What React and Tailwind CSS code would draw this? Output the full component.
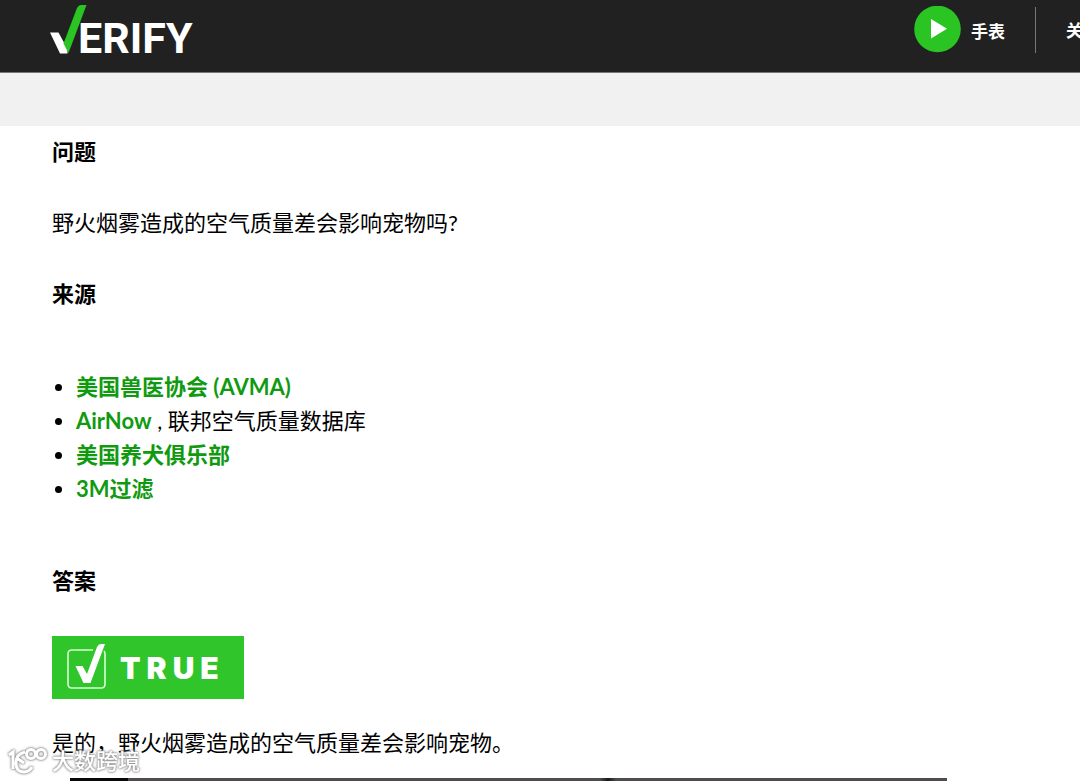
import React from "react";

const sources = [
  { link: "美国兽医协会 (AVMA)" },
  { link: "AirNow", note: " , 联邦空气质量数据库" },
  { link: "美国养犬俱乐部" },
  { link: "3M过滤" },
];

function Logo() {
  return (
    <a href="#home" aria-label="VERIFY" className="flex items-end">
      <svg width="38" height="51" viewBox="0 0 38 51" aria-hidden="true">
        <path d="M0 28.500h8.500l6 11 3 5v5H10z" fill="#fff" />
        <path d="M18.500 49L13.500 39.500 27 4Q28.500 1 31 1h5.500z" fill="#2ac523" />
      </svg>
      <span className="-ml-[10px] text-[43px] leading-[34px] font-bold text-white font-['Roboto',sans-serif]">
        ERIFY
      </span>
    </a>
  );
}

function Header() {
  return (
    <header className="flex h-[73px] justify-between overflow-hidden border-b border-[#777] bg-[#212121] pl-[50px]">
      <div className="pt-1">
        <Logo />
      </div>
      <nav className="flex items-start pt-[6px] text-[17px] font-bold text-white">
        <a href="#watch" className="flex items-center gap-[9px]">
          <svg width="48" height="47" viewBox="0 0 48 47" aria-hidden="true">
            <circle cx="23.5" cy="23" r="23.3" fill="#2ac523" />
            <path d="M17 13v19.500L33 22.700z" fill="#fff" />
          </svg>
          <span className="pt-1">手表</span>
        </a>
        <span className="mt-px ml-[30px] h-[46px] border-l border-[#777]" />
        <a href="#about" className="ml-[30px] w-[14px] overflow-hidden pt-[13px] leading-6 whitespace-nowrap">
          关于
        </a>
      </nav>
    </header>
  );
}

function TrueBadge() {
  return (
    <div className="mt-[39px] flex h-[63px] w-[192px] items-center bg-[#2fc52b] pl-[15px] text-white">
      <svg width="42" height="48" viewBox="0 0 42 48" fill="none" aria-hidden="true">
        <path
          d="M26 6H5Q1 6 1 10v30q0 4 4 4h29q4 0 4-4V10q0-2-1-3"
          stroke="#d8ffd4"
          strokeWidth="1.600"
        />
        <path d="M8.500 22h7l4.500 8L30 3Q31.500 0 34 0H38L23.500 39H16.500z" fill="#fff" />
      </svg>
      <span className="ml-[11px] text-[30px] leading-8 font-black tracking-[6px] font-['Inter',sans-serif]">TRUE</span>
    </div>
  );
}

function Watermark() {
  return (
    <div className="absolute bottom-1 left-2 flex items-center gap-1 text-white [filter:drop-shadow(0_0_1px_#888)_drop-shadow(0_0_1px_#aaa)]">
      <svg width="40" height="30" viewBox="0 0 40 30" fill="none" stroke="currentColor" strokeWidth="3" aria-hidden="true">
        <path d="M1 9l4-3v17M17 6Q8 8 8 17q0 9 8 9 5 0 8-5M10 13l6 4" />
        <circle cx="23" cy="8" r="4.500" />
        <circle cx="33" cy="8" r="4.500" />
      </svg>
      <span className="text-[22px] leading-8 font-medium">大数跨境</span>
    </div>
  );
}

export default function App() {
  return (
    <div className="relative overflow-hidden bg-white text-[22px] leading-[33px] text-black font-['Lato','Noto_Sans_CJK_SC',sans-serif]">
      <Header />
      <div className="h-[53px] bg-[#f1f1f1]" />
      <main className="px-[52px] pt-[9px]">
        <h2 className="font-bold">问题</h2>
        <p className="mt-[38px]">野火烟雾造成的空气质量差会影响宠物吗?</p>
        <h2 className="mt-[38px] font-bold">来源</h2>
        <ul className="mt-[60px] leading-[34px]">
          {sources.map((s) => (
            <li key={s.link} className="flex items-center">
              <span className="ml-[3px] mr-[14px] size-[7px] rounded-full bg-black" />
              <span className="whitespace-pre">
                <a href="#source" className="font-bold text-[#109a10]">
                  {s.link}
                </a>
                {s.note}
              </span>
            </li>
          ))}
        </ul>
        <h2 className="mt-[58px] font-bold">答案</h2>
        <TrueBadge />
        <p className="mt-[27px]">是的，野火烟雾造成的空气质量差会影响宠物。</p>
        <div className="mt-[19px] mr-[81px] ml-[18px] flex h-[3px] bg-[#504c4e]">
          <div className="w-[58px] bg-[#080808]" />
          <div className="ml-[472px] w-4 bg-linear-to-r from-[#504c4e] via-[#101c1a] to-[#504c4e]" />
        </div>
      </main>
      <Watermark />
    </div>
  );
}
